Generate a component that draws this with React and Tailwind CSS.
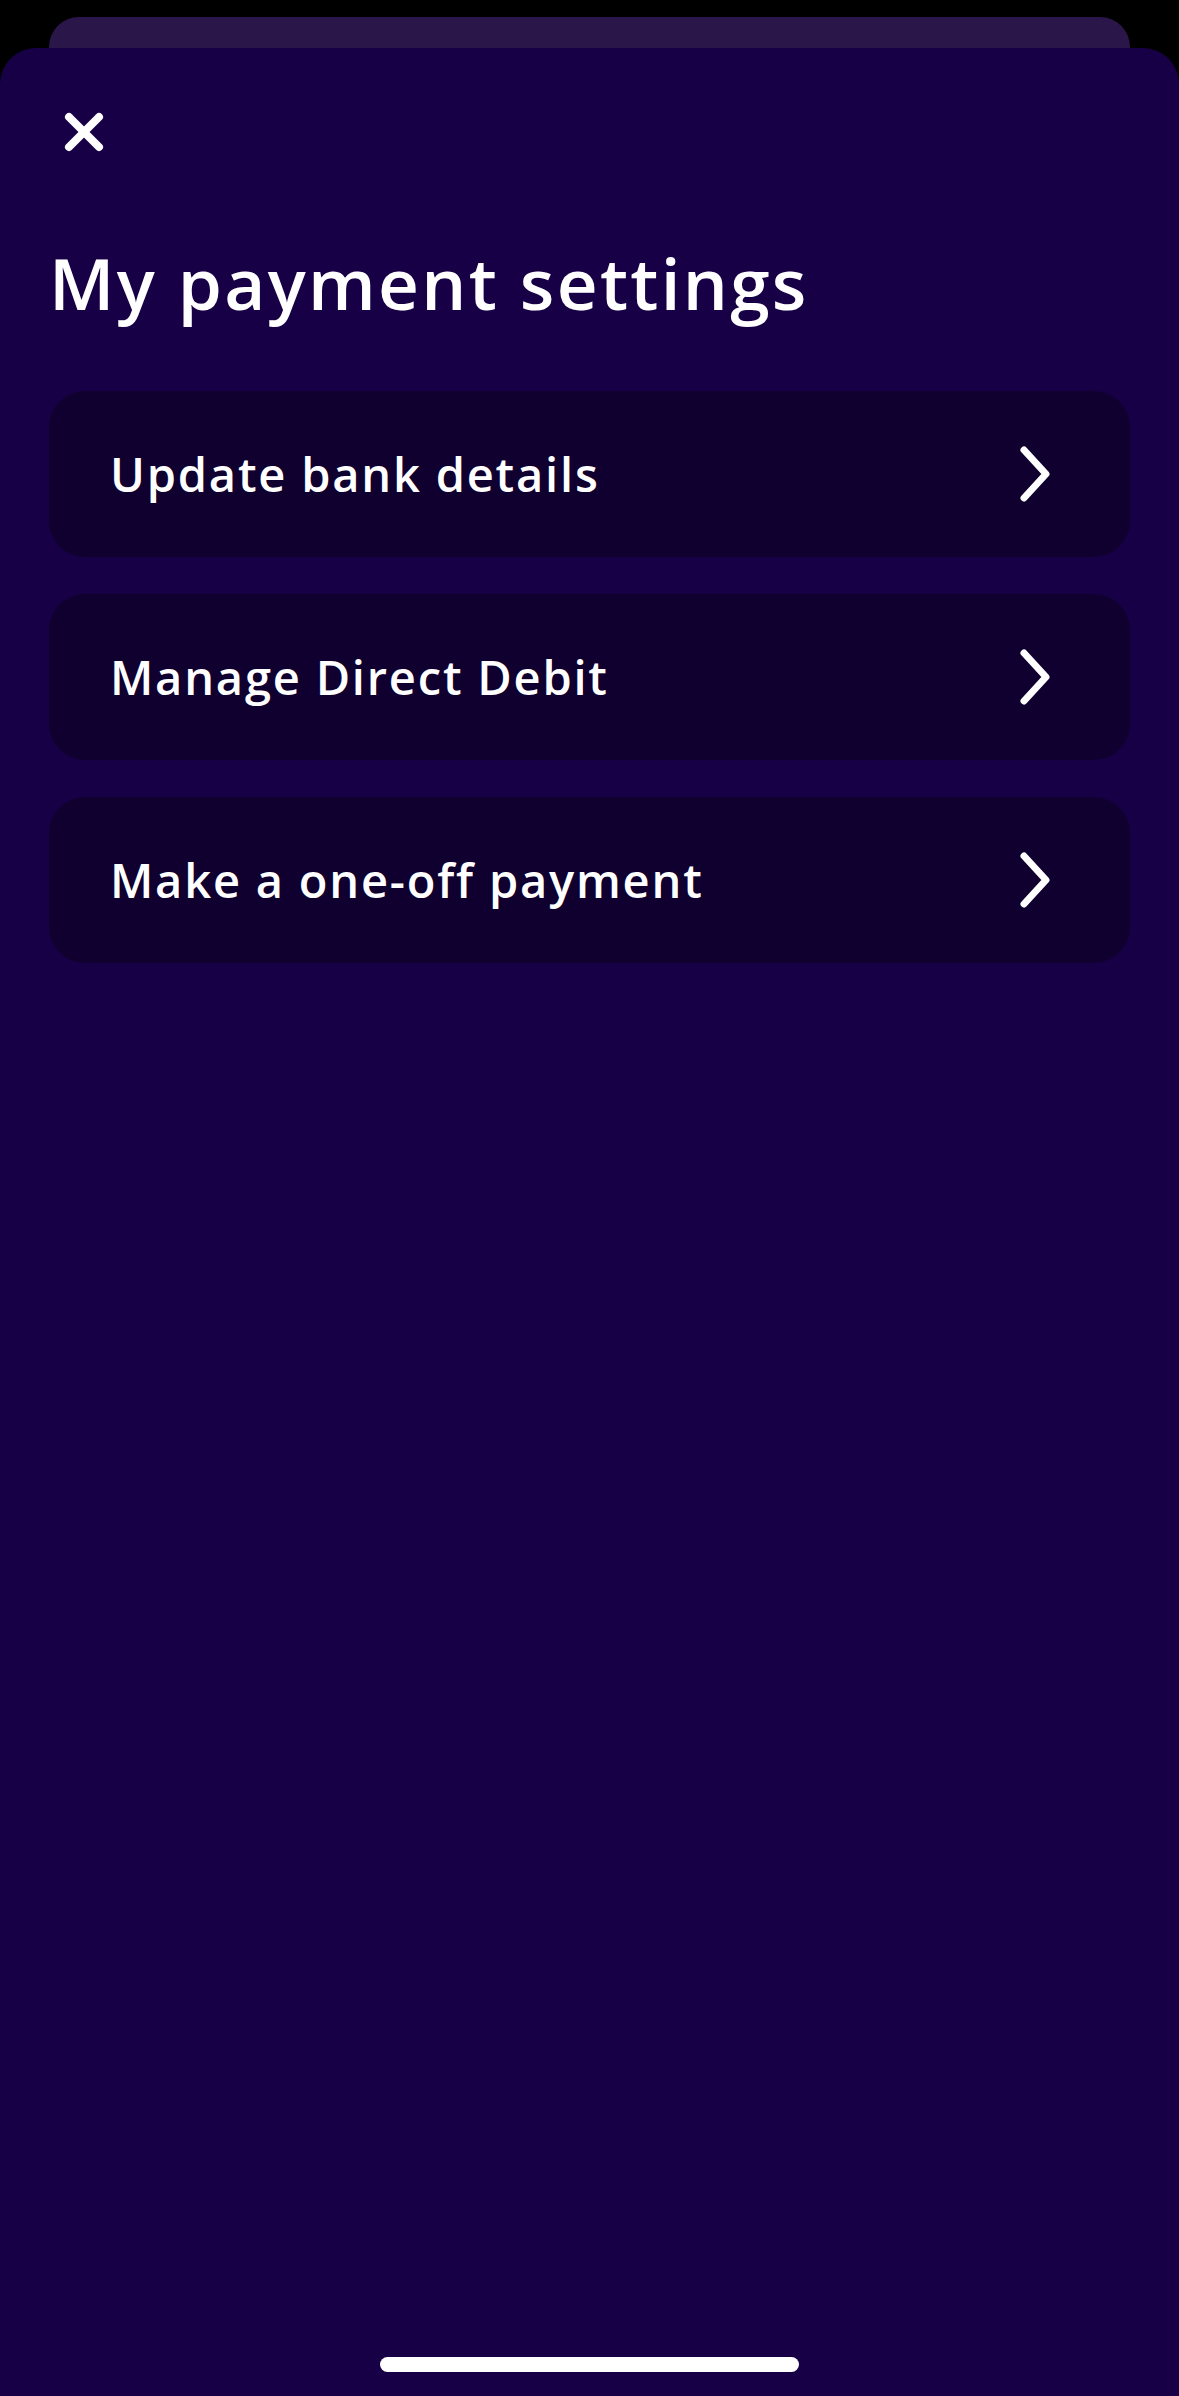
const items = ['Update bank details', 'Manage Direct Debit', 'Make a one-off payment']

export default function App() {
  return (
    <div className="flex h-[2396px] flex-col overflow-hidden bg-black" style={{ fontFamily: '"Open Sans", "Noto Sans", sans-serif' }}>
      {/* card peeking from behind */}
      <div className="mx-[49px] mt-[17px] h-[31px] shrink-0 rounded-t-[30px] bg-[#2a1649]" />

      <div className="flex flex-1 flex-col rounded-t-[36px] bg-[#170046] px-[49px]">
        <button className="ml-[15px] mt-[64px] h-[40px] w-[40px] text-white" aria-label="Close">
          <svg viewBox="0 0 40 40" width="40" height="40" fill="none" stroke="currentColor" strokeWidth="8" strokeLinecap="round">
            <line x1="5" y1="5" x2="35" y2="35" />
            <line x1="35" y1="5" x2="5" y2="35" />
          </svg>
        </button>

        <h1 className="mt-[95px] text-[71px] font-semibold leading-none tracking-[2.3px] text-white">My payment settings</h1>

        <div className="mt-[73px] flex flex-col gap-[37px]">
          {items.map((label) => (
            <div key={label} className="flex h-[166px] items-center justify-between rounded-[36px] bg-[#10002f] pl-[61px] pr-[80px]">
              <span className="text-[47px] font-semibold leading-none tracking-[1.8px] text-white">{label}</span>
              <svg viewBox="0 0 30 56" width="30" height="56" fill="none" stroke="white" strokeWidth="7" strokeLinecap="round" strokeLinejoin="round">
                <polyline points="4,4 26,28 4,52" />
              </svg>
            </div>
          ))}
        </div>

        <div className="flex-1" />
        <div className="mx-auto mb-[24px] h-[15px] w-[419px] rounded-full bg-white" />
      </div>
    </div>
  )
}
